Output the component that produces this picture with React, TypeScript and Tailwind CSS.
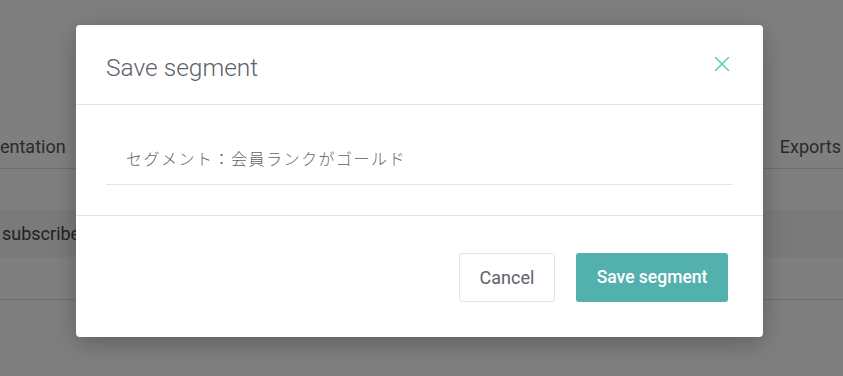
import { X } from "lucide-react";

export default function App() {
  return (
    <div className="relative h-[376px] w-[843px] overflow-hidden bg-white font-['Roboto',sans-serif]">
      {/* page behind the dialog */}
      <div className="flex flex-col">
        <div className="h-[125px]" />
        <div className="flex h-[44px] items-center justify-between border-b border-[#dedede]">
          <span className="text-[18px] text-[#555]">entation</span>
          <span className="pr-[2px] text-[18px] text-[#555]">Exports</span>
        </div>
        <div className="h-[41px]" />
        <div className="flex h-[47px] items-center bg-[#f4f4f4]">
          <span className="pl-[2px] text-[18px] text-[#444]">subscribe</span>
        </div>
        <div className="h-[43px] border-b border-[#dedede]" />
      </div>

      {/* overlay */}
      <div className="absolute inset-0 flex items-start bg-black/50 pl-[76px] pt-[25px]">
        <div className="w-[687px] rounded-[4px] bg-white shadow-[0_6px_24px_rgba(0,0,0,0.25)]">
          <div className="flex h-[80px] items-center justify-between border-b border-[#e3e3e3] pl-[30px] pr-[28px]">
            <h2 className="pt-[8px] text-[24.5px] font-light text-[#5c626b]">Save segment</h2>
            <X className="mb-[2px] size-[26px] text-[#5fd3b0]" strokeWidth={1.4} />
          </div>
          <div className="border-b border-[#e3e3e3] px-[30px] pb-[30px] pt-[30px]">
            <div className="flex h-[50px] items-center border-b border-[#e6e6e6] pb-[3px] pl-[20px] font-['Noto_Sans_CJK_JP',sans-serif] text-[16px] font-light tracking-[1.5px] text-[#5f646b]">
              セグメント：会員ランクがゴールド
            </div>
          </div>
          <div className="flex justify-end gap-[21px] pb-[35px] pr-[35px] pt-[37px]">
            <button className="h-[49px] w-[96px] rounded-[3px] border border-[#e4e4e4] bg-white text-[18px] text-[#5c626b]">
              Cancel
            </button>
            <button className="h-[49px] w-[152px] rounded-[3px] bg-[#52b0ad] text-[17.5px] font-medium text-white">
              Save segment
            </button>
          </div>
        </div>
      </div>
    </div>
  );
}
